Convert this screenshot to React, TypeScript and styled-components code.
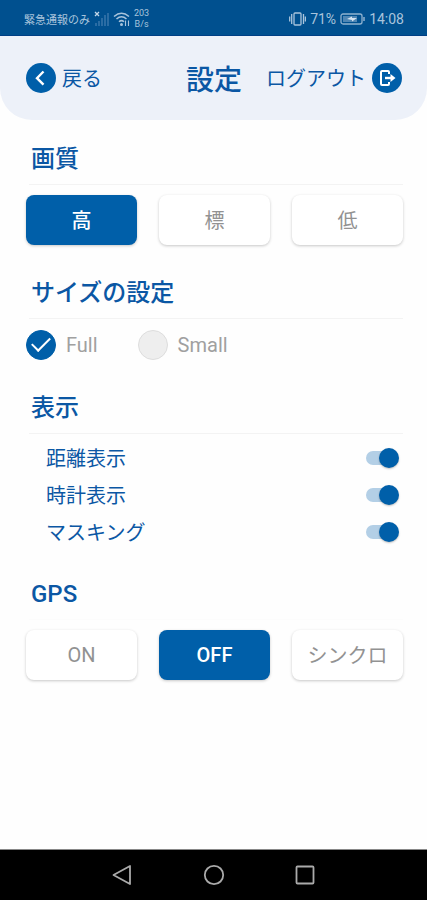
import React, { useState } from "react";
import styled, { createGlobalStyle } from "styled-components";

const blue = "#005fa9";
const ink = "#0b57a4";
const grey = "#929292";
const latin = `Roboto, "Noto Sans CJK JP", sans-serif`;
const japanese = `"Noto Sans CJK JP", Roboto, sans-serif`;

const GlobalStyle = createGlobalStyle`
  *, *::before, *::after { box-sizing: border-box; }
  body { margin: 0; background: #fefefe; font-family: ${latin}; color: ${ink}; }
  button, input { font: inherit; margin: 0; }
`;

const Screen = styled.div`
  min-height: 100vh;
  display: flex;
  flex-direction: column;
`;

const StatusBar = styled.div`
  height: 36px;
  padding: 2px 23px 0 24px;
  display: flex;
  align-items: center;
  justify-content: space-between;
  background: #00508f;
  border-bottom: 1px solid #003f85;
  color: #a9c4dc;
`;

const StatusGroup = styled.div`
  display: flex;
  align-items: center;
  gap: 4px;
`;

const Carrier = styled.span`
  font-family: ${japanese};
  font-size: 11px;
  line-height: 16px;
`;

const Speed = styled.span`
  display: flex;
  flex-direction: column;
  align-items: center;
  font-size: 9px;
  line-height: 11px;
`;

const StatusText = styled.span`
  font-size: 14px;
  line-height: 16px;
`;

const Header = styled.header`
  height: 84px;
  padding: 0 25px 0 26px;
  display: grid;
  grid-template-columns: 1fr auto 1fr;
  align-items: center;
  background: #edf1f9;
  border-radius: 0 0 32px 32px;
`;

const Title = styled.h1`
  margin: 0;
  font-family: ${japanese};
  font-size: 28px;
  line-height: 40px;
  font-weight: 500;
`;

const HeaderButton = styled.button<{ $end?: boolean }>`
  display: flex;
  align-items: center;
  gap: 6px;
  justify-self: ${(p) => (p.$end ? "end" : "start")};
  padding: 0;
  border: 0;
  background: none;
  color: ${ink};
  font-family: ${japanese};
  font-size: 20px;
  line-height: 30px;
  white-space: nowrap;
  cursor: pointer;
`;

const Content = styled.main`
  flex: 1;
  padding: 12px 24px 24px 26px;
  display: flex;
  flex-direction: column;
  gap: 17px;
`;

const Section = styled.section`
  display: flex;
  flex-direction: column;
`;

const Heading = styled.h2<{ $faint?: boolean }>`
  margin: 0 0 0 3px;
  padding: 2px 2px 0;
  height: 53px;
  display: flex;
  align-items: center;
  border-bottom: 1px solid ${(p) => (p.$faint ? "#fcfcfc" : "#f3f3f3")};
  font-size: 24px;
  line-height: 36px;
  font-weight: 500;
`;

const Choices = styled.div`
  display: grid;
  grid-template-columns: repeat(3, 1fr);
  gap: 22px;
  padding: 10px 0 4px;
`;

const Choice = styled.button<{ $on: boolean; $latin: boolean }>`
  height: 50px;
  padding: 0;
  border: 0;
  border-radius: 8px;
  background: ${(p) => (p.$on ? blue : "#ffffff")};
  color: ${(p) => (p.$on ? "#ffffff" : grey)};
  box-shadow: 0 1px 3px rgba(0, 0, 0, 0.22);
  font-family: ${(p) => (p.$latin ? latin : japanese)};
  font-size: 20px;
  line-height: 30px;
  font-weight: ${(p) => (p.$on ? 500 : 400)};
  cursor: pointer;
`;

const Radios = styled.div`
  display: flex;
  gap: 40px;
  padding: 11px 0 4px;
`;

const RadioLabel = styled.label`
  display: flex;
  align-items: center;
  gap: 10px;
  color: #a0a0a0;
  font-size: 20px;
  line-height: 30px;
`;

const RadioInput = styled.input`
  appearance: none;
  width: 30px;
  height: 30px;
  border: 1px solid #dddddd;
  border-radius: 50%;
  background: #eeeeee;
  display: grid;
  place-items: center;
  &:checked {
    border-color: ${blue};
    background: ${blue};
  }
  &:checked::before {
    content: "";
    width: 18px;
    height: 10px;
    margin-bottom: 6px;
    border: solid #ffffff;
    border-width: 0 0 2px 2px;
    transform: rotate(-45deg);
  }
`;

const SwitchRows = styled.div`
  padding-top: 5px;
`;

const SwitchRow = styled.label`
  display: flex;
  align-items: center;
  justify-content: space-between;
  height: 37px;
  padding: 0 4px 0 20px;
  font-family: ${japanese};
  font-size: 20px;
  line-height: 30px;
`;

const SwitchInput = styled.input`
  appearance: none;
  width: 33px;
  height: 20px;
  display: flex;
  align-items: center;
  &::before {
    content: "";
    flex: none;
    width: 28px;
    height: 14px;
    border-radius: 7px;
    background: #b3cfe6;
  }
  &::after {
    content: "";
    flex: none;
    width: 20px;
    height: 20px;
    margin-left: -15px;
    border-radius: 50%;
    background: ${blue};
    box-shadow: 0 1px 2px rgba(0, 0, 0, 0.25);
  }
  &:not(:checked)::before { background: #d5d5d5; }
  &:not(:checked)::after { margin-left: -28px; background: #f4f4f4; }
`;

const NavBar = styled.nav`
  height: 51px;
  padding: 0 107px;
  display: flex;
  align-items: center;
  justify-content: space-between;
  background: #000000;
  border-top: 1px solid #888888;
`;

const NavButton = styled.button`
  display: flex;
  padding: 4px;
  border: 0;
  background: none;
  cursor: pointer;
`;

const BackIcon = () => (
  <svg width="30" height="30" viewBox="0 0 30 30" aria-hidden="true">
    <circle cx="15" cy="15" r="15" fill={blue} />
    <path d="M17.5 8.5 11 15.2l6.500 6.500" fill="none" stroke="#fff" strokeWidth="2.4" />
  </svg>
);

const LogoutIcon = () => (
  <svg width="30" height="30" viewBox="0 0 30 30" aria-hidden="true">
    <circle cx="15" cy="15" r="15" fill={blue} />
    <path d="M17 11V9q0-1-1-1h-6q-1 0-1 1v12q0 1 1 1h6q1 0 1-1v-2" fill="none" stroke="#fff" strokeWidth="2" />
    <path d="M13 15h7" stroke="#fff" strokeWidth="2.4" />
    <path d="M18.5 11 23.500 15l-5 4z" fill="#fff" />
  </svg>
);

const SignalIcon = () => (
  <svg width="15" height="17" viewBox="0 0 15 17" aria-hidden="true">
    <path d="m1 2 4 4m0-4L1 6" stroke="#c4d7e8" strokeWidth="1.3" />
    <path d="M2 13v3M5 11v5M8 8v8M11 5v11M14 3v13" stroke="#3d79ad" strokeWidth="1.4" />
  </svg>
);

const WifiIcon = () => (
  <svg width="17" height="16" viewBox="0 0 17 16" aria-hidden="true">
    <g fill="none" stroke="#a9c4dc" strokeWidth="1.5">
      <path d="M1 5.5q7.5-6.5 15 0M3.5 8q5-4.5 10 0M6 10.7q2.5-2.2 5 0" />
      <path d="M12.500 15V9.500M15.500 9.500V15" strokeWidth="1.1" />
    </g>
    <circle cx="8.5" cy="13.5" r="1.5" fill="#a9c4dc" />
  </svg>
);

const VibrateIcon = () => (
  <svg width="17" height="14" viewBox="0 0 17 14" aria-hidden="true">
    <g fill="none" stroke="#a9c4dc" strokeWidth="1.3">
      <rect x="5" y="1" width="7" height="12" rx="1" />
      <path d="M2.7 2v10M14.5 2v10M.7 4.5v5M16.4 4.5v5" />
    </g>
  </svg>
);

const BatteryIcon = () => (
  <svg width="25" height="12" viewBox="0 0 25 12" aria-hidden="true">
    <rect x="1" y="1" width="21" height="10" rx="2" fill="none" stroke="#8fb2d0" strokeWidth="1.3" />
    <rect x="3" y="3" width="14" height="6" fill="#4f86b4" />
    <path d="M7 6l5-2.500v1.500h5l-5 3.500V7z" fill="#d5e3ef" />
    <path d="M24 4v4" stroke="#8fb2d0" strokeWidth="1.5" />
  </svg>
);

const isLatin = (text: string) => /^[A-Za-z]+$/.test(text);

function ChoiceGroup({ label, options, initial }: { label: string; options: string[]; initial: string }) {
  const [value, setValue] = useState(initial);
  return (
    <Choices role="group" aria-label={label}>
      {options.map((o) => (
        <Choice
          key={o}
          type="button"
          $on={o === value}
          $latin={isLatin(o)}
          aria-pressed={o === value}
          onClick={() => setValue(o)}
        >
          {o}
        </Choice>
      ))}
    </Choices>
  );
}

export default function App() {
  return (
    <>
      <GlobalStyle />
      <Screen lang="ja">
        <StatusBar>
          <StatusGroup>
            <Carrier>緊急通報のみ</Carrier>
            <SignalIcon />
            <WifiIcon />
            <Speed>
              <span>203</span>
              <span>B/s</span>
            </Speed>
          </StatusGroup>
          <StatusGroup>
            <VibrateIcon />
            <StatusText>71%</StatusText>
            <BatteryIcon />
            <StatusText>14:08</StatusText>
          </StatusGroup>
        </StatusBar>
        <Header>
          <HeaderButton type="button">
            <BackIcon />
            戻る
          </HeaderButton>
          <Title>設定</Title>
          <HeaderButton type="button" $end>
            ログアウト
            <LogoutIcon />
          </HeaderButton>
        </Header>
        <Content>
          <Section>
            <Heading>画質</Heading>
            <ChoiceGroup label="画質" options={["高", "標", "低"]} initial="高" />
          </Section>
          <Section>
            <Heading>サイズの設定</Heading>
            <Radios>
              <RadioLabel>
                <RadioInput type="radio" name="size" defaultChecked />
                Full
              </RadioLabel>
              <RadioLabel>
                <RadioInput type="radio" name="size" />
                Small
              </RadioLabel>
            </Radios>
          </Section>
          <Section>
            <Heading>表示</Heading>
            <SwitchRows>
              {["距離表示", "時計表示", "マスキング"].map((name) => (
                <SwitchRow key={name}>
                  {name}
                  <SwitchInput type="checkbox" role="switch" defaultChecked />
                </SwitchRow>
              ))}
            </SwitchRows>
          </Section>
          <Section>
            <Heading $faint>GPS</Heading>
            <ChoiceGroup label="GPS" options={["ON", "OFF", "シンクロ"]} initial="OFF" />
          </Section>
        </Content>
        <NavBar>
          <NavButton type="button" aria-label="戻る">
            <svg width="22" height="22" viewBox="0 0 22 22" fill="none" stroke="#aaa" strokeWidth="1.8">
              <path d="M19 2v18L2.5 11z" strokeLinejoin="round" />
            </svg>
          </NavButton>
          <NavButton type="button" aria-label="ホーム">
            <svg width="22" height="22" viewBox="0 0 22 22" fill="none" stroke="#aaa" strokeWidth="1.8">
              <circle cx="11" cy="11" r="9.2" />
            </svg>
          </NavButton>
          <NavButton type="button" aria-label="履歴">
            <svg width="22" height="22" viewBox="0 0 22 22" fill="none" stroke="#aaa" strokeWidth="1.8">
              <rect x="2.5" y="2.5" width="17" height="17" rx="1" />
            </svg>
          </NavButton>
        </NavBar>
      </Screen>
    </>
  );
}
